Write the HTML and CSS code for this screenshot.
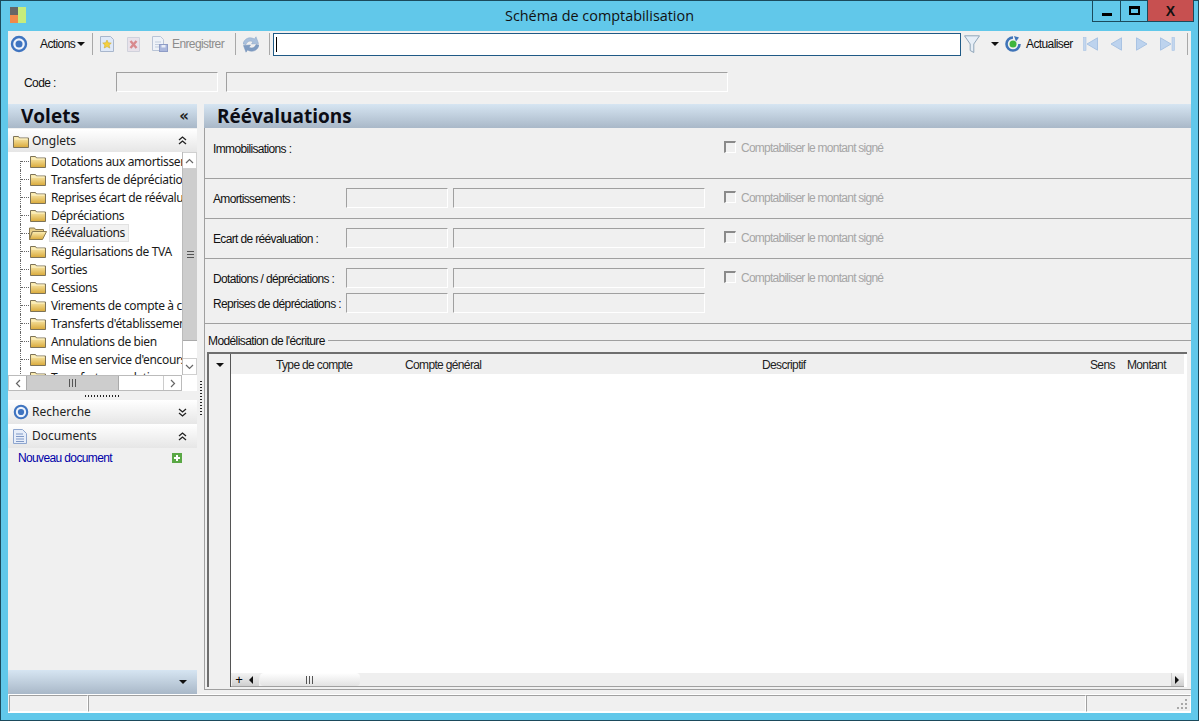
FILE: index.html
```html
<!DOCTYPE html>
<html lang="fr">
<head>
<meta charset="utf-8">
<title>Schéma de comptabilisation</title>
<link rel="stylesheet" href="styles.css">
</head>
<body>
<svg class="defs" width="0" height="0" aria-hidden="true">
  <defs>
    <linearGradient id="fg" x1="0" y1="0" x2="0" y2="1"><stop offset="0" stop-color="#fdf0b8"/><stop offset="1" stop-color="#d9a93a"/></linearGradient>
    <symbol id="folder" viewBox="0 0 16 14"><path d="M.5 2.500h5l1 1.500h9v9.500h-15z" fill="url(#fg)" stroke="#7d7358"/><path d="M1.500 5h13" stroke="#fff6cf"/></symbol>
    <symbol id="folder-open" viewBox="0 0 18 14"><path d="M.5 2h5l1 1.500h8v2h-11l-3 8z" fill="#e8cf88" stroke="#8a7a50"/><path d="M3.500 5.500h14l-4 8h-13z" fill="url(#fg)" stroke="#8a7a50"/></symbol>
    <symbol id="ring" viewBox="0 0 18 18"><circle cx="9" cy="9" r="7" fill="#eef3fb" stroke="#3f74c0" stroke-width="2.400"/><circle cx="9" cy="9" r="3.500" fill="#3f74c0"/></symbol>
    <symbol id="dbl-up" viewBox="0 0 9 9"><path d="M1 4l3.500-3L8 4M1 8l3.500-3L8 8" fill="none" stroke="#222" stroke-width="1.300"/></symbol>
    <symbol id="dbl-down" viewBox="0 0 9 9"><path d="M1 1l3.500 3L8 1M1 5l3.500 3L8 5" fill="none" stroke="#222" stroke-width="1.300"/></symbol>
  </defs>
</svg>
<div class="window">
  <header class="titlebar">
    <svg class="app-icon" width="16" height="16" viewBox="0 0 16 16"><rect width="8" height="8" fill="#666"/><rect y="8" width="8" height="8" fill="#f08a4b"/><rect x="8" width="8" height="16" fill="#c6ec7c"/></svg>
    <h1 class="title">Schéma de comptabilisation</h1>
    <div class="winctl">
      <div class="winbtn win-min"><span class="glyph-min"></span></div>
      <div class="winbtn win-max"><span class="glyph-max"></span></div>
      <div class="winbtn win-close">X</div>
    </div>
  </header>

  <div class="client">
    <div class="toolbar">
      <svg class="tb-ring" width="18" height="18"><use href="#ring"/></svg>
      <span class="tb-actions">Actions</span>
      <span class="caret tb-caret"></span>
      <span class="tsep sep-a"></span>
      <svg class="tb-new" width="14" height="16" viewBox="0 0 14 16"><path d="M.5.5h10l3 3v12H.5z" fill="#dfe9f8" stroke="#a8b6cc"/><path d="M7 4l1.300 2.800 3 .3-2.200 2 .7 3L7 10.600 4.200 12l.7-3-2.200-2 3-.3z" fill="#f5d03e" stroke="#c9a326" stroke-width=".5"/></svg>
      <svg class="tb-del" width="13" height="15" viewBox="0 0 13 15"><path d="M.5.5h12v14H.5z" fill="#e8e2ea" stroke="#d0d2dc"/><path d="M3.500 4l6 7M9.500 4l-6 7" stroke="#d88a8e" stroke-width="2.400"/></svg>
      <svg class="tb-save" width="16" height="16" viewBox="0 0 16 16"><path d="M.5.500h8l3 3v11H.5z" fill="#eef2f8" stroke="#b9c4d6"/><path d="M3 6h6M3 8.500h6M3 11h4" stroke="#c2cddd"/><rect x="7.500" y="8.500" width="8" height="7" fill="#aab7dc" stroke="#8e9cc6"/><rect x="9.500" y="9" width="4" height="2.500" fill="#e8edf7"/></svg>
      <span class="tb-save-label">Enregistrer</span>
      <span class="tsep sep-b"></span>
      <svg class="tb-sync" width="16" height="17" viewBox="0 0 16 17"><path d="M0 8C1 3 6 0 11.500 3L13 .8 15.500 7.500 8.500 8 10 5.800C7 4.200 4 5.500 3 8.500z" fill="#a9c0dc" stroke="#8aa4c6" stroke-width=".5"/><path d="M16 9c-1 5-6 8-11.500 5L3 16.200.5 9.500 7.500 9 6 11.200c3 1.600 6 .3 7-2.700z" fill="#7f9cc2" stroke="#7290b8" stroke-width=".5"/></svg>
      <span class="tsep sep-c"></span>
      <div class="search"><span class="text-caret"></span></div>
      <svg class="tb-filter" width="16" height="19" viewBox="0 0 16 19"><path d="M.5.800h15L9.800 9v8.500l-3.600-2V9z" fill="#e6eef7" stroke="#8fa5b9"/></svg>
      <span class="caret tb-caret2"></span>
      <svg class="tb-refresh" width="16" height="16" viewBox="0 0 16 16"><path d="M8 1.500a6.500 6.500 0 1 0 6.500 6.500" fill="none" stroke="#3f74b8" stroke-width="2.600"/><path d="M9 0l5 1.500-3 4z" fill="#3f74b8"/><circle cx="8" cy="8" r="3.500" fill="#3fb53c"/></svg>
      <span class="tb-refresh-label">Actualiser</span>
      <svg class="nav nav-first" width="15" height="14" viewBox="0 0 15 14"><rect x=".5" y=".5" width="2.500" height="13" fill="#c3d6ee" stroke="#a9c3e3" stroke-width=".6"/><path d="M14.500.8v12.400L4 7z" fill="#bdd3ee" stroke="#a9c3e3"/></svg>
      <svg class="nav nav-prev" width="12" height="14" viewBox="0 0 12 14"><path d="M11.500.8v12.400L1 7z" fill="#bdd3ee" stroke="#a9c3e3"/></svg>
      <svg class="nav nav-next" width="12" height="14" viewBox="0 0 12 14"><path d="M.5.800v12.400L11 7z" fill="#bdd3ee" stroke="#a9c3e3"/></svg>
      <svg class="nav nav-last" width="15" height="14" viewBox="0 0 15 14"><path d="M.5.800v12.400L11 7z" fill="#bdd3ee" stroke="#a9c3e3"/><rect x="12" y=".5" width="2.500" height="13" fill="#c3d6ee" stroke="#a9c3e3" stroke-width=".6"/></svg>
      <span class="tsep sep-d"></span>
    </div>

    <div class="coderow">
      <span class="code-label">Code :</span>
      <span class="field f-code1"></span>
      <span class="field f-code2"></span>
    </div>

    <div class="panes">
      <aside class="side">
        <div class="panehead side-head"><span class="pane-title">Volets</span><span class="collapse">«</span></div>
        <div class="band band-onglets">
          <svg class="band-icon" width="16" height="14"><use href="#folder"/></svg>
          <span class="band-label">Onglets</span>
          <svg class="band-arrow" width="9" height="9"><use href="#dbl-up"/></svg>
        </div>
        <div class="treebox">
          <div class="treeview">
            <ul class="tree">
              <li class="node"><svg class="ficon" width="18" height="14"><use href="#folder"/></svg><span class="nlabel">Dotations aux amortissements</span></li>
              <li class="node"><svg class="ficon" width="18" height="14"><use href="#folder"/></svg><span class="nlabel">Transferts de dépréciations</span></li>
              <li class="node"><svg class="ficon" width="18" height="14"><use href="#folder"/></svg><span class="nlabel">Reprises écart de réévaluation</span></li>
              <li class="node"><svg class="ficon" width="18" height="14"><use href="#folder"/></svg><span class="nlabel">Dépréciations</span></li>
              <li class="node"><svg class="ficon" width="18" height="14"><use href="#folder-open"/></svg><span class="nlabel nlabel-sel">Réévaluations</span></li>
              <li class="node"><svg class="ficon" width="18" height="14"><use href="#folder"/></svg><span class="nlabel">Régularisations de TVA</span></li>
              <li class="node"><svg class="ficon" width="18" height="14"><use href="#folder"/></svg><span class="nlabel">Sorties</span></li>
              <li class="node"><svg class="ficon" width="18" height="14"><use href="#folder"/></svg><span class="nlabel">Cessions</span></li>
              <li class="node"><svg class="ficon" width="18" height="14"><use href="#folder"/></svg><span class="nlabel">Virements de compte à compte</span></li>
              <li class="node"><svg class="ficon" width="18" height="14"><use href="#folder"/></svg><span class="nlabel">Transferts d'établissements</span></li>
              <li class="node"><svg class="ficon" width="18" height="14"><use href="#folder"/></svg><span class="nlabel">Annulations de bien</span></li>
              <li class="node"><svg class="ficon" width="18" height="14"><use href="#folder"/></svg><span class="nlabel">Mise en service d'encours</span></li>
              <li class="node"><svg class="ficon" width="18" height="14"><use href="#folder"/></svg><span class="nlabel">Transferts en relation</span></li>
            </ul>
          </div>
          <div class="vscroll">
            <span class="sb-btn sb-v"><svg width="9" height="6" viewBox="0 0 9 6"><path d="M1 5l3.500-3.500L8 5" fill="none" stroke="#666" stroke-width="1.200"/></svg></span>
            <span class="v-thumb"><span class="grip-h"></span></span>
            <span class="v-track"></span>
            <span class="sb-btn sb-v"><svg width="9" height="6" viewBox="0 0 9 6"><path d="M1 1l3.500 3.500L8 1" fill="none" stroke="#666" stroke-width="1.200"/></svg></span>
          </div>
          <div class="hscroll">
            <span class="sb-btn sb-h"><svg width="6" height="9" viewBox="0 0 6 9"><path d="M5 1L1.500 4.500 5 8" fill="none" stroke="#666" stroke-width="1.200"/></svg></span>
            <span class="h-thumb"><span class="grip-v"></span></span>
            <span class="h-track"></span>
            <span class="sb-btn sb-h"><svg width="6" height="9" viewBox="0 0 6 9"><path d="M1 1l3.500 3.500L1 8" fill="none" stroke="#666" stroke-width="1.200"/></svg></span>
          </div>
        </div>
        <div class="hsplit"><span class="dots-h"></span></div>
        <div class="band band-search">
          <svg class="band-icon" width="16" height="16"><use href="#ring"/></svg>
          <span class="band-label">Recherche</span>
          <svg class="band-arrow" width="9" height="9"><use href="#dbl-down"/></svg>
        </div>
        <div class="band band-docs">
          <svg class="band-icon" width="14" height="15" viewBox="0 0 14 15"><path d="M.5.500h9l4 4v10H.5z" fill="#e6edf9" stroke="#8ea6cf"/><path d="M3 5h7M3 7.500h8M3 10h8M3 12.500h8" stroke="#7f98c6"/></svg>
          <span class="band-label">Documents</span>
          <svg class="band-arrow" width="9" height="9"><use href="#dbl-up"/></svg>
        </div>
        <div class="docbody">
          <a class="newdoc">Nouveau document</a>
          <svg class="plus" width="10" height="10" viewBox="0 0 10 10"><rect width="10" height="10" fill="#5aa845"/><path d="M5 2v6M2 5h6" stroke="#fff" stroke-width="2"/></svg>
        </div>
        <div class="panefoot"><span class="caret"></span></div>
      </aside>

      <div class="vsplit"><span class="dots-v"></span></div>

      <main class="main">
        <div class="panehead main-head"><span class="pane-title">Réévaluations</span></div>
        <section class="fsec sec-1">
          <div class="frow"><span class="flabel">Immobilisations :</span><span class="nofields"></span><span class="cbox"></span><span class="cblabel">Comptabiliser le montant signé</span></div>
        </section>
        <section class="fsec sec-2">
          <div class="frow"><span class="flabel">Amortissements :</span><span class="field f-a"></span><span class="field f-b"></span><span class="cbox"></span><span class="cblabel">Comptabiliser le montant signé</span></div>
        </section>
        <section class="fsec sec-3">
          <div class="frow"><span class="flabel">Ecart de réévaluation :</span><span class="field f-a"></span><span class="field f-b"></span><span class="cbox"></span><span class="cblabel">Comptabiliser le montant signé</span></div>
        </section>
        <section class="fsec sec-4">
          <div class="frow"><span class="flabel">Dotations / dépréciations :</span><span class="field f-a"></span><span class="field f-b"></span><span class="cbox"></span><span class="cblabel">Comptabiliser le montant signé</span></div>
          <div class="frow frow-2"><span class="flabel">Reprises de dépréciations :</span><span class="field f-a"></span><span class="field f-b"></span></div>
        </section>
        <section class="model">
          <div class="legend"><span class="legend-text">Modélisation de l'écriture</span><span class="legend-line"></span></div>
          <div class="grid">
            <div class="grid-gutter"><span class="caret gutter-caret"></span></div>
            <div class="grid-main">
              <div class="grid-head">
                <span class="col col-type">Type de compte</span>
                <span class="col col-compte">Compte général</span>
                <span class="col col-desc">Descriptif</span>
                <span class="col col-sens">Sens</span>
                <span class="col col-mont">Montant</span>
              </div>
              <div class="grid-body"></div>
              <div class="grid-foot">
                <span class="gf-plus">+</span>
                <span class="gf-btn"><span class="tri-l"></span></span>
                <span class="gf-thumb"><span class="grip-v"></span></span>
                <span class="gf-track"></span>
                <span class="gf-btn gf-right"><span class="tri-r"></span></span>
              </div>
            </div>
          </div>
        </section>
      </main>
    </div>

    <footer class="status">
      <span class="st st-1"></span>
      <span class="st st-2"></span>
      <span class="st st-3"><svg width="12" height="12" viewBox="0 0 12 12"><path d="M9 1h2v2H9zM5 5h2v2H5zM9 5h2v2H9zM1 9h2v2H1zM5 9h2v2H5zM9 9h2v2H9z" fill="#a8a8a8"/></svg></span>
    </footer>
  </div>
</div>
</body>
</html>
```
FILE: styles.css
```css
* { box-sizing: border-box; }
html, body { margin: 0; padding: 0; height: 100%; overflow: hidden; }
body { font-family: "Liberation Sans", Arial, sans-serif; font-size: 12px; color: #111; background: #61c8ea; }
.defs { position: absolute; }
ul { list-style: none; margin: 0; padding: 0; }
svg { display: block; flex: none; }

.window { width: 1199px; height: 721px; display: flex; flex-direction: column; background: #61c8ea; border: 1px solid #1b4a5c; }

.titlebar { height: 30px; flex: none; display: flex; align-items: flex-start; position: relative; }
.app-icon { margin: 6px 0 0 9px; }
.title { position: absolute; left: 0; right: 0; top: 5px; margin: 0; text-align: center; font: 400 14.400px/20px "Open Sans", sans-serif; color: #111; }
.winctl { position: absolute; top: -1px; right: 4px; display: flex; height: 22px; border: 1px solid #1b4a5c; border-top: 0; }
.winbtn { height: 21px; display: flex; align-items: center; justify-content: center; border-right: 1px solid #1b4a5c; }
.win-min { width: 28px; }
.win-max { width: 27px; }
.win-close { width: 45px; background: #c75050; border-right: 0; font-weight: 700; font-size: 14px; color: #111; }
.glyph-min { width: 10px; height: 3px; background: #000; margin-top: 7px; }
.glyph-max { width: 11px; height: 9px; border: 2px solid #000; border-top-width: 3px; }

.client { flex: 1; margin: 0 7px 7px 7px; background: #f0f0f0; display: flex; flex-direction: column; min-height: 0; border-bottom: 1px solid #fff; }

.toolbar { height: 26px; flex: none; display: flex; align-items: center; color: #111; letter-spacing: -.6px; }
.tb-ring { margin-left: 2px; }
.tb-actions { margin-left: 12px; width: 35px; white-space: nowrap; }
.caret { display: inline-block; width: 0; height: 0; border: 4px solid transparent; border-top: 4px solid #111; border-bottom: 0; flex: none; }
.tb-caret { margin-left: 2px; }
.tsep { width: 1px; height: 22px; background: #a8a8a8; flex: none; }
.sep-a { margin-left: 7px; }
.tb-new { margin-left: 7px; }
.tb-del { margin-left: 13px; }
.tb-save { margin-left: 12px; }
.tb-save-label { margin-left: 4px; width: 54px; color: #8c8c8c; white-space: nowrap; }
.sep-b { margin-left: 9px; }
.tb-sync { margin-left: 7px; }
.sep-c { margin-left: 10px; }
.search { margin-left: 3px; width: 688px; height: 23px; flex: none; border: 1px solid #1f5a86; background: #fff; padding: 3px 0 0 2px; }
.text-caret { display: block; width: 1px; height: 15px; background: #000; }
.tb-filter { margin-left: 3px; }
.tb-caret2 { margin-left: 11px; }
.tb-refresh { margin-left: 6px; }
.tb-refresh-label { margin-left: 5px; width: 47px; white-space: nowrap; }
.nav-first { margin-left: 10px; }
.nav-prev { margin-left: 12px; }
.nav-next { margin-left: 14px; }
.nav-last { margin-left: 12px; }
.sep-d { margin-left: 12px; }

.coderow { height: 47px; flex: none; display: flex; align-items: flex-start; padding-top: 15px; }
.code-label { margin-left: 16px; width: 92px; line-height: 22px; letter-spacing: -.6px; }
.field { display: block; height: 20px; flex: none; background: #f0f0f0; border: 1px solid #fff; border-top-color: #a0a0a0; border-left-color: #a0a0a0; }
.f-code1 { width: 102px; }
.f-code2 { width: 502px; margin-left: 8px; }

.panes { flex: 1; min-height: 0; display: flex; }
.side { width: 189px; flex: none; display: flex; flex-direction: column; }
.vsplit { width: 7px; flex: none; position: relative; }
.dots-v { position: absolute; left: 3px; top: 277px; width: 2px; height: 35px; background-image: linear-gradient(#222 50%, transparent 50%); background-size: 2px 3px; }
.main { flex: 1; min-width: 0; display: flex; flex-direction: column; }

.panehead { height: 24px; flex: none; display: flex; align-items: center; background: linear-gradient(#d6e5f2, #a9b8c8); }
.pane-title { font: 700 19px/24px "Open Sans", sans-serif; color: #0c0c14; margin-left: 13px; }
.collapse { margin-left: auto; margin-right: 8px; font: 700 15px/20px "DejaVu Sans", sans-serif; color: #222; }

.band { height: 24px; flex: none; display: flex; align-items: center; background: linear-gradient(#fff, #e6e6e6); }
.band-icon { margin-left: 5px; }
.band-label { position: absolute; margin-left: 24px; font: 12px/24px "Noto Sans", sans-serif; color: #222; }
.band-arrow { margin-left: auto; margin-right: 10px; }
.band-onglets { height: 23px; margin-top: 1px; }

.treebox { height: 239px; flex: none; display: grid; grid-template-columns: 174px 15px; grid-template-rows: 223px 16px; background: #fff; }
.treeview { overflow: hidden; background: #fff; position: relative; }
.tree { position: relative; }
.node { height: 18px; display: flex; align-items: center; padding-left: 21px; position: relative; white-space: nowrap; font: 12px/18px "Noto Sans", sans-serif; color: #1a1a1a; overflow: hidden; width: 174px; }
.node::before { content: ""; position: absolute; left: 12px; top: 0; bottom: 0; border-left: 1px dotted #666; }
.node:first-child::before { top: 9px; }
.node::after { content: ""; position: absolute; left: 13px; top: 9px; width: 8px; border-top: 1px dotted #666; }
.ficon { margin-right: 2px; }
.nlabel { padding: 1px 3px 0 2px; line-height: 16px; letter-spacing: -.36px; }
.nlabel-sel { background: #f2f2f2; border: 1px solid #e2e2e2; padding: 0 3px 0 1px; }

.vscroll { grid-row: 1 / 3; grid-column: 2; display: flex; flex-direction: column; background: #fff; border-left: 1px solid #bbb; height: 223px; }
.sb-btn { flex: none; display: flex; align-items: center; justify-content: center; background: #fff; }
.sb-v { height: 17px; border: 1px solid #d0d0d0; border-left: 0; }
.v-thumb { height: 172px; flex: none; background: #cdcdcd; border-bottom: 1px solid #aaa; display: flex; align-items: center; justify-content: center; }
.v-track { flex: 1; background: #fff; }
.grip-h { width: 7px; height: 7px; background-image: linear-gradient(#555 1px, transparent 1px); background-size: 7px 3px; }
.grip-v { width: 8px; height: 8px; background-image: linear-gradient(90deg, #555 1px, transparent 1px); background-size: 3px 8px; }
.hscroll { grid-row: 2; grid-column: 1; display: flex; background: #fff; border: 1px solid #bbb; border-left-color: #ccc; }
.sb-h { width: 17px; }
.h-thumb { width: 93px; flex: none; background: #cdcdcd; border: 1px solid #aaa; border-width: 0 1px; display: flex; align-items: center; justify-content: center; }
.h-track { flex: 1; background: #fff; border-right: 1px solid #ccc; }

.hsplit { height: 9px; flex: none; display: flex; justify-content: center; align-items: center; background: #f0f0f0; }
.dots-h { width: 35px; height: 2px; background-image: linear-gradient(90deg, #222 50%, transparent 50%); background-size: 3px 2px; }

.docbody { flex: 1; display: flex; align-items: flex-start; padding: 0 15px 0 10px; justify-content: space-between; }
.newdoc { color: #0000a8; font: 12px/20px "Liberation Sans", sans-serif; letter-spacing: -.63px; }
.plus { margin-top: 5px; }
.panefoot { height: 24px; flex: none; display: flex; align-items: center; justify-content: flex-end; padding-right: 10px; background: linear-gradient(#d6e5f2, #a9b8c8); }

.fsec { border-left: 1px solid #a0a0a0; border-top: 1px solid #a0a0a0; flex: none; }
.sec-1 { height: 50px; padding-top: 10px; border-top: 0; }
.sec-2, .sec-3 { height: 40px; padding-top: 9px; }
.sec-4 { height: 65px; padding-top: 9px; }
.frow { display: flex; align-items: center; height: 20px; padding-left: 8px; }
.frow-2 { margin-top: 5px; }
.flabel { width: 133px; flex: none; white-space: nowrap; color: #111; letter-spacing: -.65px; padding-top: 2px; }
.f-a { width: 102px; }
.f-b { width: 252px; margin-left: 5px; }
.nofields { width: 359px; flex: none; }
.cbox { width: 12px; height: 12px; flex: none; margin-left: 19px; margin-top: -2px; border: 1px solid #fff; border-top: 2px solid #8a8a8a; border-left: 2px solid #8a8a8a; background: #f0f0f0; }
.cblabel { margin-left: 5px; color: #a6a6a6; white-space: nowrap; margin-top: -1px; letter-spacing: -.75px; }

.model { flex: 1; min-height: 0; display: flex; flex-direction: column; border-top: 1px solid #a0a0a0; border-left: 1px solid #a0a0a0; border-bottom: 1px solid #a0a0a0; padding: 0 4px 2px 2px; margin-bottom: 4px; }
.legend { height: 28px; flex: none; display: flex; align-items: center; padding-left: 1px; letter-spacing: -.6px; padding-top: 6px; margin-right: -4px; }
.legend-text { white-space: nowrap; }
.legend-line { flex: 1; height: 1px; background: #a0a0a0; margin-left: 3px; margin-top: -1px; }
.grid { flex: 1; min-height: 0; display: flex; border-top: 2px solid #6e6e6e; border-left: 2px solid #6e6e6e; background: #fff; }
.grid-gutter { width: 22px; flex: none; background: #f0f0f0; border-right: 1px solid #555; display: flex; justify-content: center; padding-top: 9px; }
.grid-main { flex: 1; min-width: 0; display: flex; flex-direction: column; padding-right: 3px; }
.grid-head { height: 20px; flex: none; background: #efefef; position: relative; letter-spacing: -.65px; line-height: 23px; }
.col { position: absolute; top: 0; white-space: nowrap; color: #222; }
.col-type { left: 45px; }
.col-compte { left: 174px; }
.col-desc { left: 531px; }
.col-sens { left: 859px; }
.col-mont { left: 896px; }
.grid-body { flex: 1; background: #fff; }
.grid-foot { height: 14px; flex: none; display: flex; align-items: stretch; background: #efefef; border-bottom: 1px solid #a0a0a0; }
.gf-plus { width: 14px; margin-left: 1px; text-align: center; line-height: 13px; background: linear-gradient(#f4f4f4, #cfcfcf); font-size: 13px; color: #000; }
.gf-btn { width: 13px; flex: none; display: flex; align-items: center; padding-left: 3px; background: linear-gradient(#f4f4f4, #cfcfcf); }
.gf-right { border-left: 1px solid #ccc; }
.tri-l { width: 0; height: 0; border: 4px solid transparent; border-right: 4px solid #111; border-left: 0; }
.tri-r { width: 0; height: 0; border: 4px solid transparent; border-left: 4px solid #111; border-right: 0; }
.gf-thumb { width: 100px; flex: none; margin-left: 1px; border-radius: 4px; background: linear-gradient(#fff, #e2e2e2); display: flex; align-items: center; justify-content: center; }
.gf-track { flex: 1; }

.status { height: 18px; flex: none; display: flex; padding-left: 1px; border-top: 1px solid #fff; }
.st { display: block; flex: none; border: 1px solid #fff; border-top-color: #a0a0a0; border-left-color: #a0a0a0; height: 17px; }
.st-1 { width: 79px; }
.st-2 { width: 998px; }
.st-3 { width: 105px; display: flex; justify-content: flex-end; align-items: flex-end; padding: 0 2px 1px 0; }
```
